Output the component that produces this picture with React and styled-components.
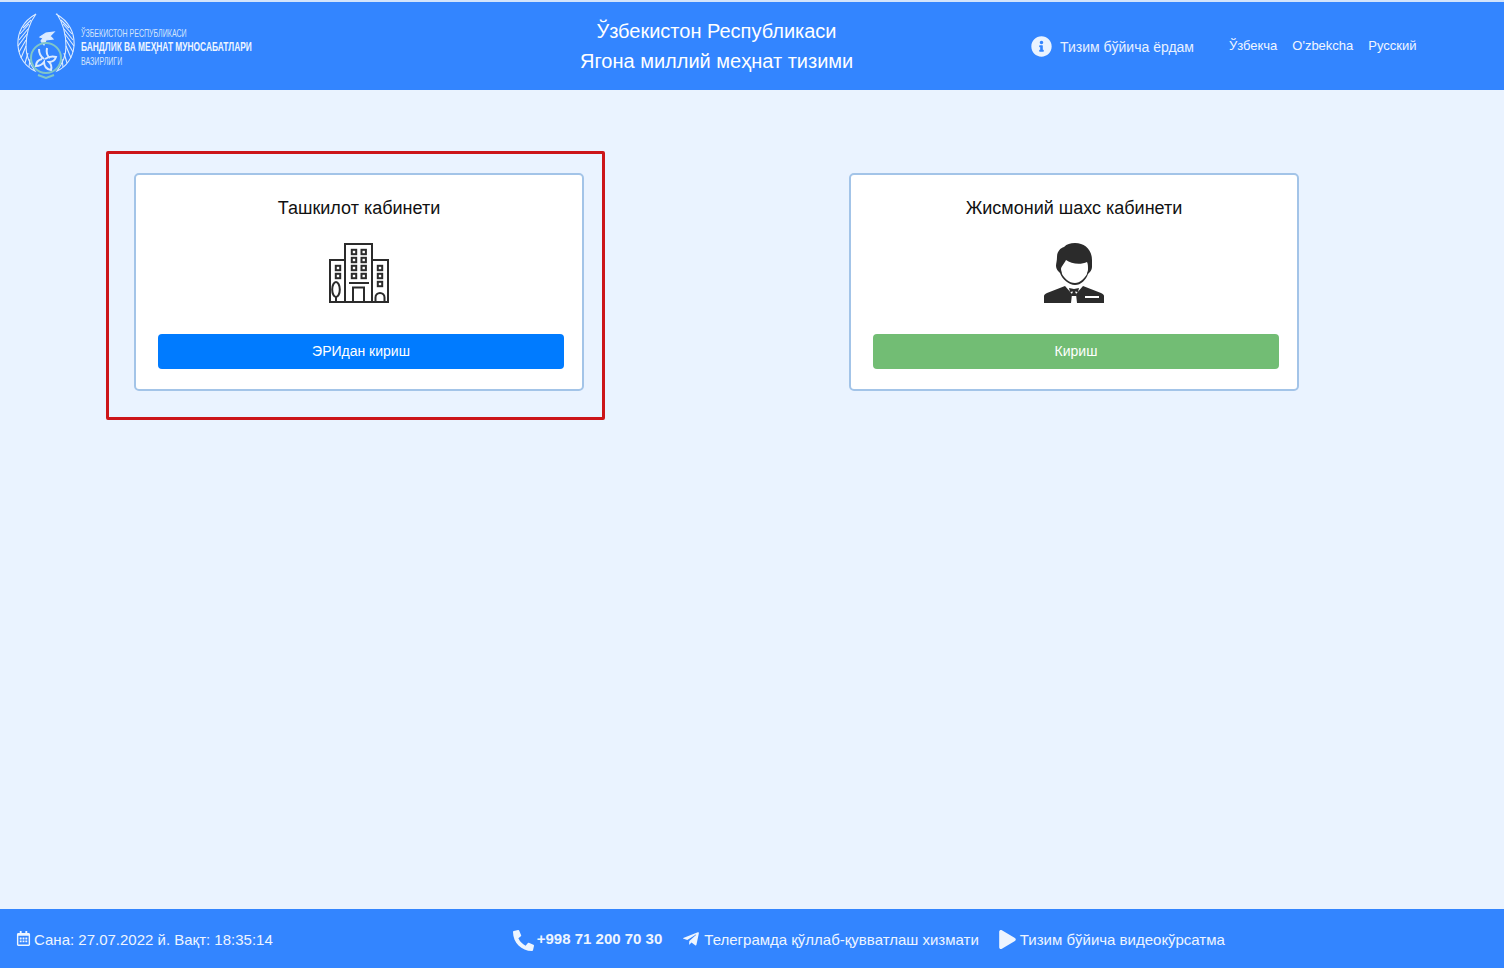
import React from 'react'
import styled, { createGlobalStyle } from 'styled-components'
import { FaInfoCircle, FaRegCalendarAlt, FaPhoneAlt, FaTelegramPlane, FaPlay } from 'react-icons/fa'

const GlobalStyle = createGlobalStyle`
  html, body {
    margin: 0;
    padding: 0;
    background: #eaf3ff;
    font-family: "Liberation Sans", Arial, sans-serif;
  }
`

const Page = styled.div`
  width: 1504px;
  height: 968px;
  display: flex;
  flex-direction: column;
  overflow: hidden;
`

const Header = styled.header`
  height: 88px;
  border-top: 2px solid #d3e4fb;
  background: #3385ff;
  color: #fff;
  display: flex;
  align-items: center;
  padding-left: 17px;
`

const Brand = styled.div`
  width: 563px;
  display: flex;
  align-items: center;
  gap: 6px;
`

const BrandText = styled.div`
  display: flex;
  flex-direction: column;
  gap: 3px;
  margin-top: 3px;
  font-size: 10.5px;
  line-height: 11px;
  color: #d3e4fb;
  white-space: nowrap;
  transform: scaleX(0.67);
  transform-origin: left center;
`

const BrandStrong = styled.span`
  font-size: 12.5px;
  font-weight: 700;
  color: #eef5ff;
`

const Title = styled.div`
  width: 273px;
  font-size: 20px;
  line-height: 30px;
  text-align: center;
  white-space: nowrap;
  margin-top: -1px;
`

const Help = styled.div`
  margin-left: 178px;
  display: flex;
  align-items: center;
  gap: 8px;
  font-size: 14px;
  color: #e8f1ff;
  white-space: nowrap;
  span {
    margin-top: 1px;
  }
`

const Langs = styled.nav`
  margin-left: 35px;
  margin-top: -2px;
  display: flex;
  gap: 15px;
  font-size: 13px;
  color: #f1f6ff;
  white-space: nowrap;
`

const Main = styled.main`
  flex: 1;
  display: flex;
  align-items: flex-start;
  gap: 244px;
  padding: 61px 0 0 106px;
`

const Highlight = styled.div`
  box-sizing: border-box;
  width: 499px;
  height: 269px;
  border: 3px solid #cc1519;
  border-radius: 2px;
  padding: 19px 0 0 25px;
`

const Card = styled.section`
  box-sizing: border-box;
  width: 450px;
  height: 218px;
  margin-top: ${props => (props.$offset ? '22px' : '0')};
  background: #fff;
  border: 2px solid #a3c4e8;
  border-radius: 5px;
  padding-top: 22px;
  display: flex;
  flex-direction: column;
  align-items: center;
`

const CardTitle = styled.h2`
  margin: 0;
  font-size: 18px;
  line-height: 22px;
  font-weight: 400;
  color: #111;
  white-space: nowrap;
`

const IconSlot = styled.div`
  height: 60px;
  margin-top: 24px;
`

const EnterButton = styled.button`
  box-sizing: border-box;
  align-self: flex-start;
  width: 406px;
  height: 35px;
  margin: 31px 0 0 22px;
  padding: 0 0 2px;
  border: none;
  border-radius: 4px;
  background: ${props => (props.$green ? '#72bd74' : '#007bff')};
  color: #fff;
  font-family: inherit;
  font-size: 14px;
  cursor: pointer;
`

const Footer = styled.footer`
  height: 59px;
  background: #3385ff;
  color: #eef5ff;
  display: flex;
  align-items: center;
  padding-left: 16px;
  font-size: 15px;
  white-space: nowrap;
`

const FooterItem = styled.div`
  display: flex;
  align-items: center;
  gap: ${props => props.$gap || 4}px;
  margin-left: ${props => props.$left || 0}px;
  margin-top: ${props => props.$top || 0}px;
  span {
    margin-top: 1px;
  }
`

const Phone = styled.span`
  font-weight: 700;
  font-size: 15px;
  && {
    margin-top: -3px;
  }
`

const Emblem = () => (
  <svg width="58" height="66" viewBox="0 0 58 66" fill="none" stroke="#dcebff" strokeWidth="1.1">
    <path d="M19 1C6 8 0 20 1 33c1 12 8 21 17 25-5-7-9-15-9-24C9 21 12 10 19 1Z" />
    <path d="M39 1c13 7 19 19 18 32-1 12-8 21-17 25 5-7 9-15 9-24 0-13-3-24-9-33Z" />
    <path d="M14 7 6 15M12 11 3 21M11 16 2 27M10 21 1 33M9 27 2 39M9 33 4 45M11 40 8 50M13 46 12 54" />
    <path d="M44 7 52 15M46 11 55 21M47 16 56 27M48 21 57 33M49 27 56 39M49 33 54 45M47 40 50 50M45 46 46 54" />
    <path d="M23 24l6-4 8-1-4 4 3 3-7 1-2 5-3-4 2-3Z" fill="#dcebff" />
    <circle cx="29" cy="45" r="15" stroke="#7fc6c9" strokeWidth="2" />
    <path d="M22 36c0 5 2 8 5 10M30 35c-1 5 0 8 3 10M25 46c-4 1-6 4-6 7 3 0 6-1 8-4 0 4 3 8 7 8 1-3 0-6-2-8 4 0 6-2 7-5-4-1-8 0-11 2" strokeWidth="2" />
    <path d="M21 62l8 3 8-3" stroke="#7fc6c9" strokeWidth="2" />
  </svg>
)

const BuildingIcon = () => (
  <svg width="60" height="60" viewBox="0 0 60 60" fill="none" stroke="#2b2b2b" strokeWidth="2">
    <path d="M16 59V1h27v58M16 17H1v42M43 17h16v42M0 59h60" />
    {[25, 34.7].map(x =>
      [9, 17, 25, 33].map(y => <rect key={`${x}-${y}`} x={x - 2.2} y={y - 2.2} width="4.4" height="4.4" />)
    )}
    {[25, 33].map(y => <rect key={y} x="6.8" y={y - 2.2} width="4.4" height="4.4" />)}
    {[25, 33, 41].map(y => <rect key={y} x="48.8" y={y - 2.2} width="4.4" height="4.4" />)}
    <path d="M20 40h20M24 59V44.500h11V59" />
    <ellipse cx="7" cy="46.500" rx="3.800" ry="7.500" />
    <path d="M7 54v5M46.500 59v-4.500a4.500 4.500 0 0 1 9 0V59" />
  </svg>
)

const PersonIcon = () => (
  <svg width="60" height="60" viewBox="0 0 60 60">
    <path
      fill="#2b2b2b"
      d="M31 0c-5 0-8 1-11 4-4 1-7 5-7 10 0 4-1 6-1 9 0 3 2 5 4 7 2 6 9 12 15 12 6 0 11-5 13-11 2-2 4-4 4-7 0-3 0-4 0-7C48 7 41 0 31 0Z"
    />
    <path
      fill="#fff"
      d="M17 26c0-2 3-5 5-9 5 4 15 5 21 2 1 2 1 4 1 7 0 3-1 3-1 5-2 4-7 9-12 9-6 0-11-5-13-9 0-2-1-3-1-5Z"
    />
    <path fill="#2b2b2b" d="M0 60V53c0-1 1-2 3-3l18-7 7 8-1 9h6l-1-9 7-8 18 7c2 1 3 2 3 3v7Z" />
    <path fill="#2b2b2b" d="M25 45l5 1 5-1-1 4-3-.5L33 53h-6l2-4.500-3 .5Z" />
    <rect x="41" y="53" width="14" height="2" fill="#fff" />
  </svg>
)

export default function App() {
  return (
    <Page>
      <GlobalStyle />
      <Header>
        <Brand>
          <Emblem />
          <BrandText>
            <span>ЎЗБЕКИСТОН РЕСПУБЛИКАСИ</span>
            <BrandStrong>БАНДЛИК ВА МЕҲНАТ МУНОСАБАТЛАРИ</BrandStrong>
            <span>ВАЗИРЛИГИ</span>
          </BrandText>
        </Brand>
        <Title>
          Ўзбекистон Республикаси
          <br />
          Ягона миллий меҳнат тизими
        </Title>
        <Help>
          <FaInfoCircle size={21} color="#eaf3ff" />
          <span>Тизим бўйича ёрдам</span>
        </Help>
        <Langs>
          <span>Ўзбекча</span>
          <span>O'zbekcha</span>
          <span>Русский</span>
        </Langs>
      </Header>

      <Main>
        <Highlight>
          <Card>
            <CardTitle>Ташкилот кабинети</CardTitle>
            <IconSlot>
              <BuildingIcon />
            </IconSlot>
            <EnterButton>ЭРИдан кириш</EnterButton>
          </Card>
        </Highlight>
        <Card $offset>
          <CardTitle>Жисмоний шахс кабинети</CardTitle>
          <IconSlot>
            <PersonIcon />
          </IconSlot>
          <EnterButton $green>Кириш</EnterButton>
        </Card>
      </Main>

      <Footer>
        <FooterItem $gap={3}>
          <FaRegCalendarAlt size={15} />
          <span>Сана: 27.07.2022 й. Вақт: 18:35:14</span>
        </FooterItem>
        <FooterItem $left={240} $gap={3} $top={3}>
          <FaPhoneAlt size={21} />
          <Phone>+998 71 200 70 30</Phone>
        </FooterItem>
        <FooterItem $left={20} $gap={4} $top={1}>
          <FaTelegramPlane size={18} />
          <span>Телеграмда қўллаб-қувватлаш хизмати</span>
        </FooterItem>
        <FooterItem $left={19} $gap={3} $top={1}>
          <FaPlay size={19} />
          <span>Тизим бўйича видеокўрсатма</span>
        </FooterItem>
      </Footer>
    </Page>
  )
}
